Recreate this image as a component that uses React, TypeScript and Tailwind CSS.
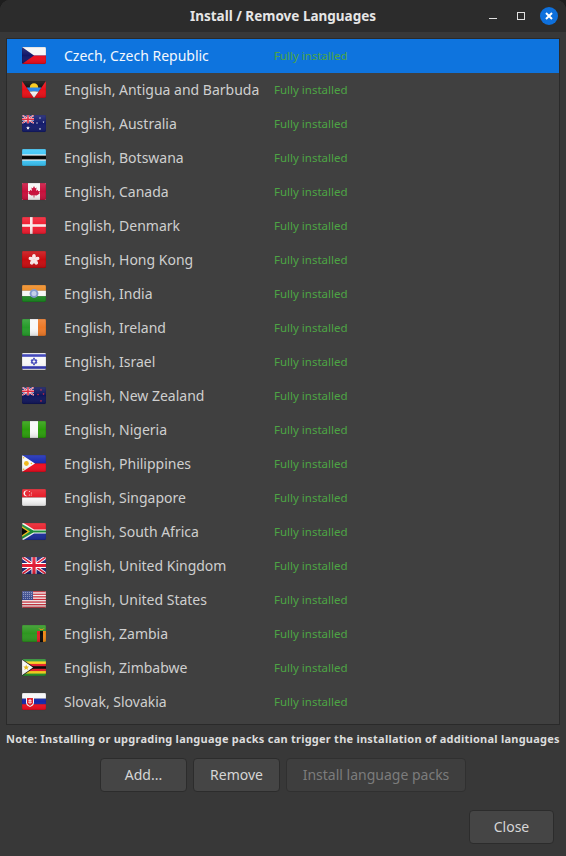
import React, { useId } from "react";

const FONT = "font-['Noto_Sans','Open_Sans',sans-serif]";

function Star({ x, y, r, fill = "#fff" }: { x: number; y: number; r: number; fill?: string }) {
  const pts: string[] = [];
  for (let i = 0; i < 10; i++) {
    const a = -Math.PI / 2 + (i * Math.PI) / 5;
    const q = i % 2 ? r * 0.45 : r;
    pts.push(`${x + q * Math.cos(a)},${y + q * Math.sin(a)}`);
  }
  return <polygon points={pts.join(" ")} fill={fill} />;
}

function UnionJack({ w = 24, h = 17 }: { w?: number; h?: number }) {
  const t = Math.min(w, h) * 0.2;
  return (
    <g>
      <rect width={w} height={h} fill="#1a2272" />
      <path d={`M0 0L${w} ${h}M${w} 0L0 ${h}`} stroke="#fff" strokeWidth={t} />
      <path d={`M0 0L${w} ${h}M${w} 0L0 ${h}`} stroke="#e01c34" strokeWidth={t / 2} />
      <path d={`M${w / 2} 0V${h}M0 ${h / 2}H${w}`} stroke="#fff" strokeWidth={t * 1.5} />
      <path d={`M${w / 2} 0V${h}M0 ${h / 2}H${w}`} stroke="#e01c34" strokeWidth={t * 0.95} />
    </g>
  );
}

const flags: Record<string, React.ReactNode> = {
  cz: (
    <>
      <rect width="24" height="8.5" fill="#f6f6f6" />
      <rect y="8.5" width="24" height="8.5" fill="#ec0c1c" />
      <path d="M0 0L12 8.5L0 17Z" fill="#121668" />
    </>
  ),
  ag: (
    <>
      <rect width="24" height="17" fill="#ea1018" />
      <path d="M0 0H24L12 17Z" fill="#0c0c0c" />
      <circle cx="12" cy="6.5" r="4.2" fill="#fbc814" />
      <path d="M4.6 6.5H19.4L16.6 10.5H7.4Z" fill="#2a86ea" />
      <path d="M7.4 10.5H16.6L12 17Z" fill="#f6f6f6" />
    </>
  ),
  au: (
    <>
      <rect width="24" height="17" fill="#141c6c" />
      <svg x="0" y="0" width="12" height="8.5" viewBox="0 0 24 17"><UnionJack /></svg>
      <Star x={6} y={13} r={2} />
      <Star x={18} y={3} r={1} />
      <Star x={21.5} y={7} r={1} />
      <Star x={15} y={8} r={1} />
      <Star x={18} y={14} r={1.1} />
    </>
  ),
  bw: (
    <>
      <rect width="24" height="17" fill="#3cc6f8" />
      <rect y="5.4" width="24" height="6.2" fill="#f2f2f2" />
      <rect y="6.6" width="24" height="3.8" fill="#060606" />
    </>
  ),
  ca: (
    <>
      <rect width="24" height="17" fill="#f6f6f6" />
      <rect width="6" height="17" fill="#c8103c" />
      <rect x="18" width="6" height="17" fill="#c8103c" />
      <path d="M12 3L13.2 5.2L14.6 4.6L14 8L15.4 6.8L16.4 8.2L18 8L17.2 10L17.8 10.6L14.6 12.6L12.4 12.2V14.4H11.6V12.2L9.4 12.6L6.2 10.6L6.8 10L6 8L7.6 8.2L8.6 6.8L10 8L9.4 4.6L10.8 5.2Z" fill="#c8103c" />
    </>
  ),
  dk: (
    <>
      <rect width="24" height="17" fill="#f01c30" />
      <rect x="8" width="2.6" height="17" fill="#f8e8e8" />
      <rect y="7.2" width="24" height="2.6" fill="#f8e8e8" />
    </>
  ),
  hk: (
    <>
      <rect width="24" height="17" fill="#c80c10" />
      {[0, 72, 144, 216, 288].map((a) => (
        <ellipse key={a} cx="12" cy="5.8" rx="1.9" ry="2.8" fill="#f8e8e8" transform={`rotate(${a} 12 8.7)`} />
      ))}
    </>
  ),
  in: (
    <>
      <rect width="24" height="5.7" fill="#ee8a22" />
      <rect y="5.7" width="24" height="5.6" fill="#f6f6f6" />
      <rect y="11.3" width="24" height="5.7" fill="#1c8a22" />
      <circle cx="12" cy="8.5" r="4.4" fill="#7f96cc" />
      <circle cx="12" cy="8.5" r="2.5" fill="#c4d0ea" />
    </>
  ),
  ie: (
    <>
      <rect width="8" height="17" fill="#269c2a" />
      <rect x="8" width="8" height="17" fill="#f8f8f8" />
      <rect x="16" width="8" height="17" fill="#ee7a28" />
    </>
  ),
  il: (
    <>
      <rect width="24" height="17" fill="#f8f8f8" />
      <rect y="1.2" width="24" height="2.6" fill="#3036b4" />
      <rect y="13.2" width="24" height="2.6" fill="#3036b4" />
      <path d="M12 4.8L15 10H9ZM12 12.2L9 7H15Z" fill="none" stroke="#3036b4" strokeWidth="0.9" />
    </>
  ),
  nz: (
    <>
      <rect width="24" height="17" fill="#10165c" />
      <svg x="0" y="0" width="12" height="8.5" viewBox="0 0 24 17"><UnionJack /></svg>
      <Star x={19} y={3} r={1.1} fill="#d8263c" />
      <Star x={16} y={7.5} r={1.1} fill="#d8263c" />
      <Star x={21.5} y={7} r={1.1} fill="#d8263c" />
      <Star x={19} y={14} r={1.2} fill="#d8263c" />
    </>
  ),
  ng: (
    <>
      <rect width="24" height="17" fill="#2c9e0c" />
      <rect x="8" width="8" height="17" fill="#f8f8f8" />
    </>
  ),
  ph: (
    <>
      <rect width="24" height="8.5" fill="#1628b0" />
      <rect y="8.5" width="24" height="8.5" fill="#f00c20" />
      <path d="M0 0L13 8.5L0 17Z" fill="#f8f8f8" />
      <circle cx="4.4" cy="8.5" r="2.4" fill="#f0b81c" />
      <circle cx="1.6" cy="2.8" r="0.8" fill="#f0b81c" />
      <circle cx="1.6" cy="14.2" r="0.8" fill="#f0b81c" />
      <circle cx="9.4" cy="8.5" r="0.8" fill="#f0b81c" />
    </>
  ),
  sg: (
    <>
      <rect width="24" height="8.5" fill="#e61c28" />
      <rect y="8.5" width="24" height="8.5" fill="#f8f8f8" />
      <circle cx="4.5" cy="4.3" r="2.9" fill="#f8f8f8" />
      <circle cx="5.6" cy="4.3" r="2.6" fill="#e61c28" />
      <circle cx="7.4" cy="2.6" r="0.5" fill="#f8f8f8" />
      <circle cx="9.4" cy="4" r="0.5" fill="#f8f8f8" />
      <circle cx="7.4" cy="6" r="0.5" fill="#f8f8f8" />
      <circle cx="9.2" cy="6" r="0.5" fill="#f8f8f8" />
    </>
  ),
  za: (
    <>
      <rect width="24" height="8.5" fill="#e81c28" />
      <rect y="8.5" width="24" height="8.5" fill="#1a2c9a" />
      <path d="M0 -1L12 6.6H24V10.4H12L0 18Z" fill="#f4f4f4" />
      <path d="M0 1L11.4 7.6H24V9.4H11.4L0 16Z" fill="#1a8c38" />
      <path d="M0 3.2L8 8.5L0 13.8Z" fill="#f4bc18" />
      <path d="M0 4.8L5.6 8.5L0 12.2Z" fill="#080808" />
    </>
  ),
  gb: <UnionJack />,
  us: (
    <>
      <rect width="24" height="17" fill="#f2f0f0" />
      {[0, 2.6, 5.2, 7.8, 10.4, 13, 15.6].map((y) => (
        <rect key={y} y={y} width="24" height="1.3" fill="#c82c38" />
      ))}
      <rect width="11" height="9" fill="#3a4a8c" />
      {[1.5, 3.5, 5.5, 7.5].map((y) =>
        [1.5, 3.5, 5.5, 7.5, 9.5].map((x) => <circle key={`${x}-${y}`} cx={x} cy={y} r="0.45" fill="#dde" />)
      )}
    </>
  ),
  zm: (
    <>
      <rect width="24" height="17" fill="#2e9620" />
      <rect x="15" y="6" width="3" height="11" fill="#e41c28" />
      <rect x="18" y="6" width="3" height="11" fill="#0c0c0c" />
      <rect x="21" y="6" width="3" height="11" fill="#f08a18" />
      <path d="M16 3L19.5 4.2L23 3L20.4 5H18.6Z" fill="#f08a18" />
    </>
  ),
  zw: (
    <>
      <rect width="24" height="17" fill="#2a9630" />
      <rect y="2.4" width="24" height="12.2" fill="#f6d218" />
      <rect y="4.9" width="24" height="7.2" fill="#e41c28" />
      <rect y="7.2" width="24" height="2.6" fill="#0c0c0c" />
      <path d="M0 0L12.5 8.5L0 17Z" fill="#0c0c0c" />
      <path d="M0 0.8L11 8.5L0 16.2Z" fill="#f8f8f8" />
      <Star x={4.2} y={8.5} r={3} fill="#e4b81c" />
    </>
  ),
  sk: (
    <>
      <rect width="24" height="5.7" fill="#f8f8f8" />
      <rect y="5.7" width="24" height="5.6" fill="#1628a8" />
      <rect y="11.3" width="24" height="5.7" fill="#f00c20" />
      <path d="M4 4H12V9.5C12 12 10 13.2 8 14C6 13.2 4 12 4 9.5Z" fill="#f8f8f8" />
      <path d="M5 5H11V9.5C11 11.2 9.5 12.2 8 13C6.5 12.2 5 11.2 5 9.5Z" fill="#e41c28" />
      <path d="M8 6V11M6.4 7.6H9.6M6 9.2H10" stroke="#f8f8f8" strokeWidth="0.8" />
    </>
  ),
};

function Flag({ code }: { code: string }) {
  const id = useId().replace(/[^a-zA-Z0-9]/g, "");
  return (
    <svg width="24" height="18" viewBox="0 0 24 18" className="block shrink-0">
      <defs>
        <clipPath id={`c${id}`}>
          <rect width="24" height="17" rx="1.4" />
        </clipPath>
        <linearGradient id={`g${id}`} x1="0" y1="0" x2="0" y2="1">
          <stop offset="0" stopColor="#fff" stopOpacity="0.14" />
          <stop offset="0.5" stopColor="#fff" stopOpacity="0" />
          <stop offset="1" stopColor="#000" stopOpacity="0.14" />
        </linearGradient>
      </defs>
      <g clipPath={`url(#c${id})`}>
        {flags[code]}
        <rect width="24" height="17" fill={`url(#g${id})`} />
      </g>
      <rect x="0.25" y="0.25" width="23.5" height="16.5" rx="1.3" fill="none" stroke="#000" strokeOpacity="0.2" strokeWidth="0.5" />
    </svg>
  );
}

const rows: [string, string][] = [
  ["cz", "Czech, Czech Republic"],
  ["ag", "English, Antigua and Barbuda"],
  ["au", "English, Australia"],
  ["bw", "English, Botswana"],
  ["ca", "English, Canada"],
  ["dk", "English, Denmark"],
  ["hk", "English, Hong Kong"],
  ["in", "English, India"],
  ["ie", "English, Ireland"],
  ["il", "English, Israel"],
  ["nz", "English, New Zealand"],
  ["ng", "English, Nigeria"],
  ["ph", "English, Philippines"],
  ["sg", "English, Singapore"],
  ["za", "English, South Africa"],
  ["gb", "English, United Kingdom"],
  ["us", "English, United States"],
  ["zm", "English, Zambia"],
  ["zw", "English, Zimbabwe"],
  ["sk", "Slovak, Slovakia"],
];

function Btn({ label, w, disabled }: { label: string; w: string; disabled?: boolean }) {
  return (
    <div
      className={`${w} h-[34px] pb-[2px] flex items-center justify-center rounded-[4px] border text-[14px] ${
        disabled
          ? "border-[#303030] bg-[#3e3e3e] text-[#7c7c7c]"
          : "border-[#2c2c2c] bg-[#454545] text-[#d6d6d6]"
      }`}
    >
      {label}
    </div>
  );
}

export default function App() {
  return (
    <div className={`w-[566px] h-[856px] overflow-hidden bg-[#1e1e1e] ${FONT}`}>
      <div className="h-full flex flex-col bg-[#383838] rounded-t-[10px] overflow-hidden">
        <div className="relative h-8 shrink-0 bg-[#2c2c2c] flex items-center justify-center">
          <span className="text-[13.5px] font-bold text-[#e6e6e6]">Install / Remove Languages</span>
          <div className="absolute right-[8px] top-[7px] flex items-center">
            <svg width="8" height="18" viewBox="0 0 8 18" className="block mr-[20px]">
              <rect x="0" y="11" width="8" height="1" fill="#e0e0e0" />
            </svg>
            <svg width="8" height="8" viewBox="0 0 8 8" className="block mr-[15px] mt-[-1px]">
              <rect x="0.5" y="0.5" width="7" height="7" fill="none" stroke="#e0e0e0" strokeWidth="1" />
            </svg>
            <svg width="18" height="18" viewBox="0 0 18 18" className="block">
              <circle cx="9" cy="9" r="9" fill="#0e70dc" />
              <path d="M6 6L12 12M12 6L6 12" stroke="#fff" strokeWidth="2" />
            </svg>
          </div>
        </div>
        <div className="flex-1 flex flex-col">
          <div className="mx-[6px] mt-[6px] h-[687px] border border-[#2a2a2a] bg-[#404040] flex flex-col">
            {rows.map(([code, name], i) => (
              <div
                key={code}
                className={`h-[34px] shrink-0 flex items-center pl-[14.5px] ${i === 0 ? "bg-[#0e74de]" : ""}`}
              >
                <Flag code={code} />
                <span className={`ml-[18.5px] w-[210px] pb-[2px] shrink-0 whitespace-nowrap text-[14px] ${i === 0 ? "text-[#f4f8fd]" : "text-[#cfcfcf]"}`}>
                  {name}
                </span>
                <span className="text-[11.5px] text-[#4da544]">Fully installed</span>
              </div>
            ))}
          </div>
          <div className="mt-[7px] pl-[6px] whitespace-nowrap text-[11px] font-bold leading-[14px] tracking-[0.24px] text-[#dcdcdc]">
            Note: Installing or upgrading language packs can trigger the installation of additional languages
          </div>
          <div className="mt-[12px] pl-[100px] flex gap-[6px]">
            <Btn label="Add..." w="w-[87px]" />
            <Btn label="Remove" w="w-[87px]" />
            <Btn label="Install language packs" w="w-[180px]" disabled />
          </div>
          <div className="mt-[18px] pr-[12px] flex justify-end">
            <Btn label="Close" w="w-[85px]" />
          </div>
        </div>
      </div>
    </div>
  );
}
